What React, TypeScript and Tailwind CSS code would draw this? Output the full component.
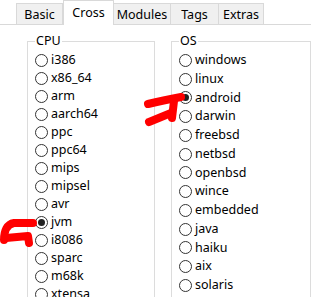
const FONT = "font-['Noto_Sans','Open_Sans',sans-serif]";

const tabs = [
  { label: 'Basic', w: 'w-[47px]' },
  { label: 'Cross', w: 'w-[51px]', active: true },
  { label: 'Modules', w: 'w-[57px]' },
  { label: 'Tags', w: 'w-[48px]' },
  { label: 'Extras', w: 'w-[45px]' },
];

const cpus = ['i386', 'x86_64', 'arm', 'aarch64', 'ppc', 'ppc64', 'mips', 'mipsel', 'avr', 'jvm', 'i8086', 'sparc', 'm68k', 'xtensa'];
const oses = ['windows', 'linux', 'android', 'darwin', 'freebsd', 'netbsd', 'openbsd', 'wince', 'embedded', 'java', 'haiku', 'aix', 'solaris'];

function Radio({ label, checked, row }: { label: string; checked?: boolean; row: string }) {
  return (
    <div className={`flex items-center ${row} gap-[3px]`}>
      <span className="w-[13px] h-[13px] rounded-full border border-[#333] bg-white flex items-center justify-center shrink-0">
        {checked && <span className="w-[7px] h-[7px] rounded-full bg-[#222]" />}
      </span>
      <span className="text-[12.5px] leading-none text-black whitespace-nowrap">{label}</span>
    </div>
  );
}

function Group({ title, items, checked, width, row }: { title: string; items: string[]; checked: string; width: string; row: string }) {
  return (
    <fieldset className={`${width} border border-[#dcdcdc] pl-[7px] pt-[2px] pb-2 shrink-0`}>
      <legend className="px-[1px] text-[12.5px] leading-[16px] text-black">{title}</legend>
      {items.map((it) => (
        <Radio key={it} label={it} checked={it === checked} row={row} />
      ))}
    </fieldset>
  );
}

export default function App() {
  return (
    <div className={`relative w-[311px] h-[297px] overflow-hidden bg-white ${FONT}`}>
      {/* 탭 */}
      <div className="flex items-end h-[25px] pl-[16px] border-b border-[#d9d9d9]">
        {tabs.map((t) =>
          t.active ? (
            <div
              key={t.label}
              className={`${t.w} h-[25px] -mb-px bg-white border border-b-0 border-[#d9d9d9] flex justify-center pt-[3px] text-[12.5px] text-black`}
            >
              {t.label}
            </div>
          ) : (
            <div
              key={t.label}
              className={`${t.w} h-[21px] bg-[#f0f0f0] border border-b-0 border-l-0 first:border-l border-[#d9d9d9] flex justify-center pt-[2px] text-[12.5px] text-black`}
            >
              {t.label}
            </div>
          )
        )}
      </div>

      {/* 그룹박스 */}
      <div className="flex gap-[16px] pl-[27px] pt-[8px]">
        <Group title="CPU" items={cpus} checked="jvm" width="w-[128px]" row="h-[18px]" />
        <Group title="OS" items={oses} checked="android" width="w-[140px]" row="h-[18.75px]" />
      </div>

      {/* 빨간 화살표 */}
      <svg className="absolute left-0 top-0 pointer-events-none" width="311" height="297" viewBox="0 0 311 297">
        <g fill="none" stroke="#ff0000" strokeWidth="8" strokeLinecap="round" strokeLinejoin="round">
          <path d="M4 240 C 4 231, 7 224, 14 223 L 33 223" />
          <path d="M6 238 L 28 236 L 29 243" />
          <path d="M148 104 C 160 101, 170 99, 181 97" />
          <path d="M174 101 L 172 118" />
          <path d="M149 122 L 171 113" />
        </g>
      </svg>
    </div>
  );
}
